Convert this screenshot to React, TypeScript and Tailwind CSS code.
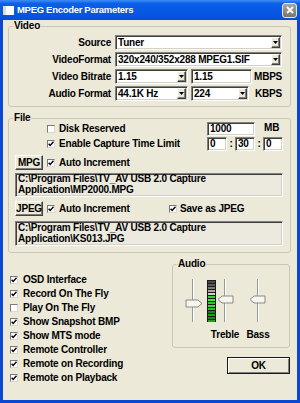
import React from "react";

const font = "font-['Liberation_Sans',Arial,sans-serif]";
const sunken =
  "border border-t-[#808080] border-l-[#808080] border-b-white border-r-white shadow-[inset_1px_1px_0_#404040,inset_-1px_-1px_0_#d4d0c8]";
const raised =
  "border border-t-white border-l-white border-b-[#404040] border-r-[#404040] shadow-[inset_-1px_-1px_0_#808080]";

function DropBtn() {
  return (
    <span className={`w-[9px] h-[11px] bg-[#ece9d8] ${raised} flex items-center justify-center shrink-0`}>
      <svg width="5" height="3" viewBox="0 0 5 3">
        <path d="M0 0 H5 L2.5 3 Z" fill="black" />
      </svg>
    </span>
  );
}

function Combo({ value, className }: { value: string; className: string }) {
  return (
    <div className={`${className} h-[15px] bg-white ${sunken} flex items-center pl-[2px] pr-[1px]`}>
      <span className="flex-1 leading-none whitespace-nowrap">{value}</span>
      <DropBtn />
    </div>
  );
}

function TextBox({ value, className }: { value: string; className: string }) {
  return (
    <div className={`${className} bg-white ${sunken} flex items-center pl-[2px] leading-none`}>
      {value}
    </div>
  );
}

function Check({ on }: { on?: boolean }) {
  return (
    <span className="w-[8px] h-[8px] shrink-0 bg-white border border-t-[#7a7a7a] border-l-[#7a7a7a] border-b-[#d8d8d8] border-r-[#d8d8d8] flex items-center justify-center">
      {on && (
        <svg width="6" height="6" viewBox="0 0 6 6">
          <path d="M0.6 2.8 L2.2 4.5 L5.5 0.8" stroke="black" strokeWidth="1.4" fill="none" />
        </svg>
      )}
    </span>
  );
}

function SmallBtn({ label }: { label: string }) {
  return (
    <span className={`ml-[6px] w-[28px] h-[15px] bg-[#ece9d8] ${raised} flex items-center justify-center leading-none`}>
      {label}
    </span>
  );
}

function Field({ label, children }: { label: string; children: React.ReactNode }) {
  return (
    <div className="flex items-center h-[15px]">
      <span className="w-[102px] text-right leading-none">{label}</span>
      {children}
    </div>
  );
}

function PathBox({ lines, className }: { lines: string[]; className: string }) {
  return (
    <div className={`${className} ml-[6px] w-[268px] bg-[#eceadf] ${sunken} pl-[2px] flex flex-col justify-center`}>
      {lines.map((l) => (
        <div key={l} className="h-[11px] leading-[10px] whitespace-nowrap">{l}</div>
      ))}
    </div>
  );
}

function AudioSliders() {
  const segs = [
    "#4a4a4a", "#5c5c5c", "#7a7a7a", "#a8a8a8", "#cfcfcf",
    "#2bd92b", "#3fe83f", "#25cc25", "#39e039", "#22c822",
    "#128a12", "#1aa01a", "#128a12", "#1aa01a",
  ];
  return (
    <svg width="90" height="48" viewBox="0 0 90 48" className="ml-[7px]">
      {[13, 45, 78].map((x) => (
        <g key={x}>
          <rect x={x - 1} y="2" width="1" height="43" fill="#9a9a94" />
          <rect x={x} y="2" width="1" height="43" fill="#ffffff" />
        </g>
      ))}
      <polygon points="6,23 18,23 22,26.5 18,30 6,30" fill="#f6f5f0" stroke="#8c8a80" strokeWidth="1" />
      <polygon points="38,22.5 42,19 53,19 53,26 42,26" fill="#f6f5f0" stroke="#8c8a80" strokeWidth="1" />
      <polygon points="70,22.5 74,19 85,19 85,26 74,26" fill="#f6f5f0" stroke="#8c8a80" strokeWidth="1" />
      <rect x="27" y="3" width="9" height="42" fill="#1a1a1a" />
      {segs.map((c, i) => (
        <rect key={i} x="28" y={4 + i * 3} width="7" height="2" fill={c} />
      ))}
    </svg>
  );
}

export default function App() {
  return (
    <div className={`w-[300px] h-[403px] flex flex-col bg-[#0a48d4] text-[10px] font-bold tracking-[-0.2px] text-black ${font}`}>
      {/* title bar */}
      <div className="h-[20px] shrink-0 flex items-center bg-[linear-gradient(180deg,#3d8ef6_0%,#0b5fe8_18%,#0656e2_70%,#0a4dd2_100%)]">
        <span className="ml-[3px] w-[11px] h-[9px] bg-white border-l-[3px] border-[#c8c8c8] border-l-[#dcdcdc]" />
        <span className="ml-[3px] text-white text-[9.5px] tracking-[-0.3px] leading-none">MPEG Encoder Parameters</span>
        <span className="ml-auto mr-[3px] w-[15px] h-[15px] rounded-[3px] border border-[#e8e8e0] bg-[linear-gradient(#a9a79e,#77756c)] flex items-center justify-center">
          <svg width="8" height="8" viewBox="0 0 8 8">
            <path d="M1 1 L7 7 M7 1 L1 7" stroke="white" strokeWidth="1.8" />
          </svg>
        </span>
      </div>

      <div className="flex-1 mx-[3px] mb-[3px] bg-[#ece9d8] pl-[5px] pr-[6px] flex flex-col">
        {/* Video */}
        <fieldset className="border border-[#c9c7ba] rounded-[3px] pb-[5px]">
          <legend className="ml-[4px] px-[1px] leading-[12px]">Video</legend>
          <div className="mt-[3px] flex flex-col gap-[2px]">
            <Field label="Source">
              <Combo className="ml-[4px] w-[167px]" value="Tuner" />
            </Field>
            <Field label="VideoFormat">
              <Combo className="ml-[4px] w-[167px]" value="320x240/352x288 MPEG1.SIF" />
            </Field>
            <Field label="Video Bitrate">
              <Combo className="ml-[4px] w-[73px]" value="1.15" />
              <TextBox className="ml-[3px] w-[61px] h-[15px]" value="1.15" />
              <span className="ml-[2px] leading-none">MBPS</span>
            </Field>
            <Field label="Audio Format">
              <Combo className="ml-[4px] w-[73px]" value="44.1K Hz" />
              <Combo className="ml-[3px] w-[58px]" value="224" />
              <span className="ml-[6px] leading-none">KBPS</span>
            </Field>
          </div>
        </fieldset>

        {/* File */}
        <fieldset className="mt-[5px] border border-[#c9c7ba] rounded-[3px] pb-[6px]">
          <legend className="ml-[4px] px-[1px] leading-[12px]">File</legend>
          <div className="-mt-[2px] flex items-center h-[14px]">
            <div className="w-[198px] pl-[38px] flex items-center">
              <Check />
              <span className="ml-[4px] leading-none">Disk Reserved</span>
            </div>
            <TextBox className="w-[48px] h-[14px]" value="1000" />
            <span className="ml-[9px] leading-none self-start mt-[1px]">MB</span>
          </div>
          <div className="mt-[1px] flex items-center h-[14px]">
            <div className="w-[198px] pl-[38px] flex items-center">
              <Check on />
              <span className="ml-[4px] leading-none">Enable Capture Time Limit</span>
            </div>
            <TextBox className="w-[20px] h-[14px]" value="0" />
            <span className="w-[8px] text-center leading-none">:</span>
            <TextBox className="w-[20px] h-[14px]" value="30" />
            <span className="w-[8px] text-center leading-none">:</span>
            <TextBox className="w-[20px] h-[14px]" value="0" />
          </div>
          <div className="mt-[4px] flex items-center h-[15px]">
            <SmallBtn label="MPG" />
            <span className="ml-[4px]"><Check on /></span>
            <span className="ml-[4px] leading-none">Auto Increment</span>
          </div>
          <PathBox
            className="mt-[3px] h-[24px]"
            lines={["C:\\Program Files\\TV_AV USB 2.0 Capture", "Application\\MP2000.MPG"]}
          />
          <div className="mt-[4px] flex items-center h-[15px]">
            <SmallBtn label="JPEG" />
            <span className="ml-[4px]"><Check on /></span>
            <span className="ml-[4px] w-[110px] leading-none">Auto Increment</span>
            <Check on />
            <span className="ml-[3px] leading-none">Save as JPEG</span>
          </div>
          <PathBox
            className="mt-[5px] h-[25px]"
            lines={["C:\\Program Files\\TV_AV USB 2.0 Capture", "Application\\KS013.JPG"]}
          />
        </fieldset>

        {/* bottom */}
        <div className="flex items-start">
          <div className="w-[164px] pl-[2px] pt-[20px] flex flex-col">
            {[
              ["OSD Interface", true],
              ["Record On The Fly", true],
              ["Play On The Fly", false],
              ["Show Snapshot BMP", true],
              ["Show MTS mode", true],
              ["Remote Controller", true],
              ["Remote on Recording", true],
              ["Remote on Playback", true],
            ].map(([label, on]) => (
              <div key={label as string} className="h-[14px] flex items-center">
                <Check on={on as boolean} />
                <span className="ml-[5px] leading-none">{label as string}</span>
              </div>
            ))}
          </div>
          <div className="w-[118px] flex flex-col">
            <fieldset className="mt-[5px] border border-[#c9c7ba] rounded-[3px] pb-[6px]">
              <legend className="ml-[4px] px-[1px] leading-[12px]">Audio</legend>
              <div className="mt-[7px]">
                <AudioSliders />
              </div>
              <div className="mt-[4px] ml-[34px] flex h-[12px] items-center">
                <span className="w-[36px] text-center leading-none">Treble</span>
                <span className="w-[30px] text-center leading-none">Bass</span>
              </div>
            </fieldset>
            <div className="mt-[9px] ml-[55px] w-[63px] h-[17px] border border-[#1a1a1a] shadow-[inset_1px_1px_0_#ffffff,inset_-1px_-1px_0_#808080] bg-[#ece9d8] flex items-center justify-center leading-none">
              OK
            </div>
          </div>
        </div>
      </div>
    </div>
  );
}
